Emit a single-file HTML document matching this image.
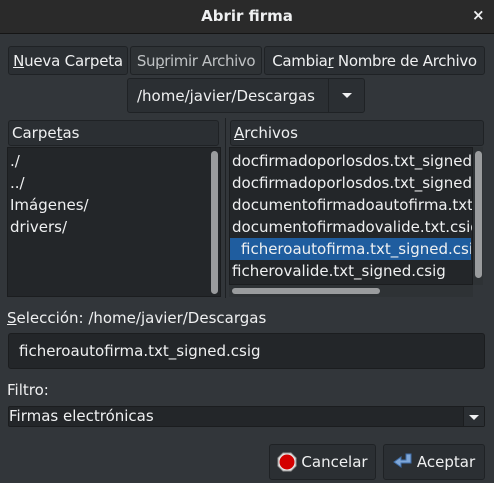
<!DOCTYPE html>
<html><head><meta charset="utf-8"><style>
*{box-sizing:border-box;margin:0;padding:0}
body{width:494px;height:483px;background:#32363a;font-family:"DejaVu Sans","Liberation Sans",sans-serif;font-size:15px;color:#eff0f1;position:relative;overflow:hidden}
.a{position:absolute;white-space:nowrap}
.btn{position:absolute;background:#2b2f33;border:1px solid #1f2225;border-radius:3px;display:flex;align-items:center;justify-content:center;white-space:nowrap;overflow:hidden}
.list{position:absolute;background:#232629;border:1px solid #1b1d1f;overflow:hidden}
.row{height:22px;line-height:22px;padding-left:2px;white-space:nowrap;overflow:hidden}
u{text-decoration:underline}
</style></head><body>
<div class="a" style="left:0;top:0;width:494px;height:34px;background:#2a2a2a;border-bottom:1px solid #151515"></div>
<div class="a" style="left:0;top:7px;width:494px;text-align:center;font-weight:bold;font-size:15px">Abrir firma</div>
<div class="a" style="left:472px;top:6px;font-weight:bold;font-size:15px">×</div>

<div class="btn" style="left:8px;top:46px;width:120px;height:29px;letter-spacing:-0.2px"><span><u>N</u>ueva Carpeta</span></div>
<div class="btn" style="left:130px;top:46px;width:132px;height:29px;color:#bfc2c4;background:#2e3235;letter-spacing:-0.4px"><span>Su<u>p</u>rimir Archivo</span></div>
<div class="btn" style="left:264px;top:46px;width:221px;height:29px;letter-spacing:-0.3px"><span>Cambia<u>r</u> Nombre de Archivo</span></div>

<div class="btn" style="left:127px;top:78px;width:238px;height:35px;justify-content:flex-start;padding-left:9px">/home/javier/Descargas</div>
<div class="a" style="left:328px;top:79px;width:1px;height:33px;background:#1f2225"></div>
<div class="a" style="left:342px;top:93px;width:0;height:0;border-left:5px solid transparent;border-right:5px solid transparent;border-top:5px solid #eff0f1"></div>

<div class="btn" style="left:8px;top:120px;width:211px;height:26px;justify-content:flex-start;padding-left:3px">Carpe<u>t</u>as</div>
<div class="btn" style="left:230px;top:120px;width:254px;height:26px;justify-content:flex-start;padding-left:3px"><span><u>A</u>rchivos</span></div>
<div class="a" style="left:225px;top:118px;width:1px;height:180px;background:#1e2124"></div>

<div class="list" style="left:7px;top:147px;width:214px;height:150px">
<div class="row" style="margin-top:2px">./</div><div class="row">../</div><div class="row">Imágenes/</div><div class="row">drivers/</div>
</div>
<div class="a" style="left:211px;top:151px;width:7px;height:143px;background:#9a9c9e;border-radius:4px"></div>

<div class="list" style="left:229px;top:147px;width:244px;height:138px;background:#232629">
<div class="row" style="margin-top:2px">docfirmadoporlosdos.txt_signed</div>
<div class="row">docfirmadoporlosdos.txt_signed</div>
<div class="row">documentofirmadoautofirma.txt</div>
<div class="row">documentofirmadovalide.txt.csig</div>
<div class="row" style="background:#1f5d9f;padding-left:11px;width:241px">ficheroautofirma.txt_signed.csig</div>
<div class="row">ficherovalide.txt_signed.csig</div>
</div>
<div class="a" style="left:473px;top:147px;width:10px;height:138px;background:#2e3235"></div>
<div class="a" style="left:475px;top:151px;width:7px;height:127px;background:#9a9c9e;border-radius:4px"></div>
<div class="a" style="left:229px;top:285px;width:244px;height:12px;background:#2e3235"></div>
<div class="a" style="left:232px;top:288px;width:148px;height:6px;background:#9a9c9e;border-radius:3px"></div>

<div class="a" style="left:7px;top:309px"><u>S</u>elección: /home/javier/Descargas</div>
<div class="a" style="left:8px;top:333px;width:477px;height:36px;background:#232629;border:1px solid #1b1d1f;border-radius:3px;padding:8px 0 0 10px">ficheroautofirma.txt_signed.csig</div>
<div class="a" style="left:7px;top:381px">Filtro:</div>
<div class="a" style="left:8px;top:406px;width:477px;height:21px;background:#232629;border:1px solid #1b1d1f;border-radius:2px;padding:0 0 0 0">Firmas electrónicas</div>
<div class="a" style="left:463px;top:407px;width:21px;height:19px;background:#2b2f33;border-left:1px solid #1b1d1f"></div>
<div class="a" style="left:469px;top:415px;width:0;height:0;border-left:5px solid transparent;border-right:5px solid transparent;border-top:5px solid #eff0f1"></div>

<div class="btn" style="left:269px;top:444px;width:107px;height:36px">
<svg width="20" height="20" viewBox="0 0 20 20" style="margin-right:4px"><polygon points="6,1 14,1 19,6 19,14 14,19 6,19 1,14 1,6" fill="#e8e8e8" stroke="#999" stroke-width="1"/><circle cx="10" cy="10" r="7.5" fill="#d30000"/></svg>
<span>Cancelar</span></div>
<div class="btn" style="left:383px;top:444px;width:102px;height:36px">
<svg width="20" height="18" viewBox="0 0 20 18" style="margin-right:4px"><path d="M13 1h5v9H8v4L1 9l7-5v3h5z" fill="#7fa7d8" stroke="#3f6ea8" stroke-width="1"/></svg>
<span>Aceptar</span></div>
</body></html>
